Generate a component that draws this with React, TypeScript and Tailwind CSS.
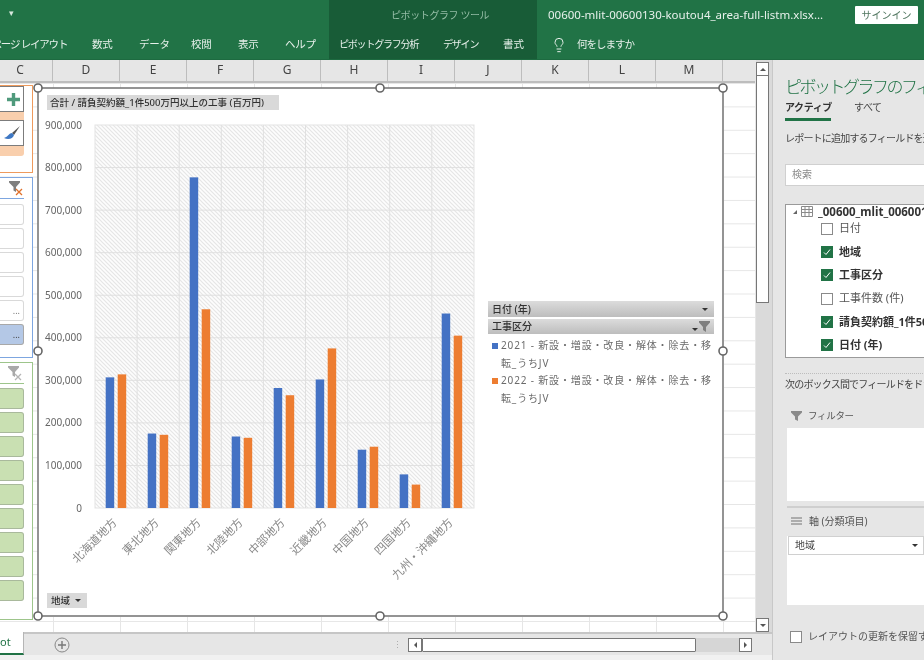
import { Lightbulb } from "lucide-react";

const tabs = [
  { label: "数式", cls: "w-[47px]" },
  { label: "データ", cls: "w-[52px]" },
  { label: "校閲", cls: "w-[47px]" },
  { label: "表示", cls: "w-[47px]" },
  { label: "ヘルプ", cls: "w-[44px]" },
];
const columns = [
  { label: "C", cls: "w-[53px] pr-[12px]" },
  { label: "D", cls: "w-[67px]" },
  { label: "E", cls: "w-[67px]" },
  { label: "F", cls: "w-[67px]" },
  { label: "G", cls: "w-[67px]" },
  { label: "H", cls: "w-[67px]" },
  { label: "I", cls: "w-[67px]" },
  { label: "J", cls: "w-[67px]" },
  { label: "K", cls: "w-[67px]" },
  { label: "L", cls: "w-[67px]" },
  { label: "M", cls: "w-[67px]" },
];
const regions = [
  { name: "北海道地方", a: 307000, b: 314000 },
  { name: "東北地方", a: 175000, b: 172000 },
  { name: "関東地方", a: 777000, b: 467000 },
  { name: "北陸地方", a: 168000, b: 165000 },
  { name: "中部地方", a: 282000, b: 265000 },
  { name: "近畿地方", a: 302000, b: 375000 },
  { name: "中国地方", a: 137000, b: 144000 },
  { name: "四国地方", a: 79000, b: 55000 },
  { name: "九州・沖縄地方", a: 457000, b: 405000 },
];
const fields = [
  { label: "日付", on: false },
  { label: "地域", on: true },
  { label: "工事区分", on: true },
  { label: "工事件数 (件)", on: false },
  { label: "請負契約額_1件500万円以上の工事", on: true },
  { label: "日付 (年)", on: true },
];
const handles = [
  [38, 88],
  [380, 88],
  [723, 88],
  [38, 351],
  [723, 351],
  [38, 616],
  [380, 616],
  [723, 616],
];
const yOf = (v: number) => 508 - (v / 900000) * 383;

function FilterClear({ muted }: { muted?: boolean }) {
  return (
    <svg width="16" height="15" viewBox="0 0 16 15">
      <path d="M0 0h11v1.500L7 6v5L4.500 9.500V6L0 1.500z" fill={muted ? "#a9a9a9" : "#7f7f7f"} />
      <path d="M7 8l6 6M13 8l-6 6" stroke={muted ? "#b5b5b5" : "#e0702a"} strokeWidth="1.300" fill="none" />
    </svg>
  );
}

function Slot({ cls, children }: { cls: string; children?: React.ReactNode }) {
  return (
    <div className={`h-[21px] w-[24px] rounded-r-[3px] border border-l-0 flex items-center justify-end pr-[3px] text-[9px] ${cls}`}>
      {children}
    </div>
  );
}

function Slicers() {
  return (
    <div className="w-[33px] shrink-0 flex flex-col pt-[2px] gap-[4px]">
      <div className="h-[88px] w-[33px] border-[1.5px] border-l-0 border-[#ee9a5c] flex flex-col bg-white">
        <div className="h-[26px] w-[24px] bg-white border border-l-0 border-[#7c7c7c] flex items-center justify-center">
          <svg width="15" height="15" viewBox="0 0 15 15" className="ml-[3px]">
            <path d="M7.500 1v13M1 7.500h13" stroke="#4f9a7c" strokeWidth="3.400" />
          </svg>
        </div>
        <div className="h-[8px] w-[24px] bg-[#f9cfad]" />
        <div className="h-[26px] w-[24px] bg-white border border-l-0 border-[#7c7c7c] flex items-center justify-center">
          <svg width="18" height="16" viewBox="0 0 18 16" className="ml-[1px]">
            <path d="M17 1 9 8l2 2z" fill="#555" />
            <path d="M9 8c-3 0-3 3-8 5 4 2 9 1 10-3z" fill="#3f78c4" />
          </svg>
        </div>
        <div className="h-[10px] w-[24px] bg-[#f9cfad] rounded-br-[3px]" />
      </div>
      <div className="h-[181px] w-[33px] border-[1.5px] border-l-0 border-[#7da6e0] bg-white pt-[3px]">
        <div className="h-[18px] w-[24px] border-b border-[#7da6e0] flex justify-end -mr-px">
          <div className="-mr-[1px]">
            <FilterClear />
          </div>
        </div>
        <div className="flex flex-col gap-[3px] pt-[5px]">
          <Slot cls="bg-white border-[#d9d9d9]" />
          <Slot cls="bg-white border-[#d9d9d9]" />
          <Slot cls="bg-white border-[#d9d9d9]" />
          <Slot cls="bg-white border-[#d9d9d9]" />
          <Slot cls="bg-white border-[#d9d9d9] text-[#777]">...</Slot>
          <Slot cls="bg-[#b4c8e6] border-[#a8a8a8] text-[#444]">...</Slot>
        </div>
      </div>
      <div className="h-[258px] w-[33px] border-[1.5px] border-l-0 border-[#9dc58b] bg-white pt-[3px]">
        <div className="h-[18px] w-[24px] border-b border-[#9dc58b] flex justify-end">
          <FilterClear muted />
        </div>
        <div className="flex flex-col gap-[3px] pt-[4px]">
          {Array.from({ length: 9 }).map((_, i) => (
            <Slot key={i} cls="bg-[#c9e0b2] border-[#a9b99c]" />
          ))}
        </div>
      </div>
    </div>
  );
}

function Chart() {
  return (
    <div className="relative ml-[5px] mt-[5px] w-[686px] h-[529px] bg-white">
      <svg className="absolute inset-0 overflow-visible" width="686" height="529" viewBox="38 88 686 529">
        <defs>
          <pattern id="hatch" width="4" height="4" patternUnits="userSpaceOnUse">
            <rect width="4" height="4" fill="#fdfdfd" />
            <path d="M-1 3 1 5M0 0 4 4M3 -1 5 1" stroke="#e6e6e6" strokeWidth="1.200" />
          </pattern>
        </defs>
        <rect x="95" y="125" width="379" height="383" fill="url(#hatch)" stroke="#e4e4e4" />
        {[1, 2, 3, 4, 5, 6, 7, 8].map((i) => (
          <line key={i} x1={95 + i * 42.1} x2={95 + i * 42.1} y1="125" y2="508" stroke="#e0e0e0" />
        ))}
        {[1, 2, 3, 4, 5, 6, 7, 8].map((i) => (
          <line key={i} x1="95" x2="474" y1={yOf(i * 100000)} y2={yOf(i * 100000)} stroke="#e0e0e0" />
        ))}
        {[0, 1, 2, 3, 4, 5, 6, 7, 8, 9].map((i) => (
          <text key={i} x="82" y={yOf(i * 100000) + 3.500} textAnchor="end" fontSize="10" fill="#666">
            {i === 0 ? "0" : `${i}00,000`}
          </text>
        ))}
        {regions.map((r, i) => {
          const bx = 105.700 + i * 42;
          return (
            <g key={r.name}>
              <rect x={bx} y={yOf(r.a)} width="8.500" height={508 - yOf(r.a)} fill="#4472c4" />
              <rect x={bx + 12} y={yOf(r.b)} width="8.500" height={508 - yOf(r.b)} fill="#ed7d31" />
              <text
                x={bx + 12}
                y={523}
                textAnchor="end"
                fontSize="11.500"
                fill="#8a8a8a"
                transform={`rotate(-45 ${bx + 12} 523)`}
              >
                {r.name}
              </text>
            </g>
          );
        })}
        <rect x="38" y="88" width="685" height="528" fill="none" stroke="#7a7a7a" strokeWidth="1.600" />
        {handles.map(([x, y]) => (
          <circle key={`${x}-${y}`} cx={x} cy={y} r="4" fill="#fff" stroke="#666" strokeWidth="1.600" />
        ))}
      </svg>

      <div className="absolute left-[9px] top-[7px] h-[15px] w-[232px] bg-[#d9d9d9] text-[9.500px] font-medium leading-[15px] text-[#333] pl-[3px] whitespace-nowrap">
        合計 / 請負契約額_1件500万円以上の工事 (百万円)
      </div>
      <div className="absolute left-[9px] top-[505px] h-[15px] w-[40px] bg-[#d9d9d9] text-[9.500px] font-medium leading-[15px] text-[#333] pl-[4px] flex items-center gap-[5px]">
        地域
        <span className="w-0 h-0 border-x-[3px] border-x-transparent border-t-[3px] border-t-[#333]" />
      </div>

      <div className="absolute left-[450px] top-[213px] w-[226px] text-[10px]">
        <div className="h-[16px] bg-gradient-to-b from-[#dcdcdc] to-[#bdbdbd] flex items-center justify-between px-[4px] text-[#333] font-medium">
          日付 (年)
          <span className="w-0 h-0 mr-[2px] border-x-[3px] border-x-transparent border-t-[3px] border-t-[#333]" />
        </div>
        <div className="mt-[2px] h-[15px] bg-gradient-to-b from-[#dcdcdc] to-[#bdbdbd] flex items-center justify-between px-[4px] text-[#333] font-medium">
          工事区分
          <span className="flex items-center gap-[1px]">
            <span className="w-0 h-0 mt-[5px] border-x-[3px] border-x-transparent border-t-[3px] border-t-[#333]" />
            <svg width="11" height="11" viewBox="0 0 11 11">
              <path d="M0 0h11v1.500L7 6v5L4 9V6L0 1.500z" fill="#7f7f7f" />
            </svg>
          </span>
        </div>
        <div className="pl-[4px] text-[#6b6b6b] leading-[17.500px] pt-[3px] tracking-[0.85px]">
          <div className="flex items-start">
            <span className="w-[6px] h-[6px] mt-[6px] mr-[3px] bg-[#4472c4] shrink-0" />
            <span>2021 - 新設・増設・改良・解体・除去・移転_うちJV</span>
          </div>
          <div className="flex items-start">
            <span className="w-[6px] h-[6px] mt-[6px] mr-[3px] bg-[#ed7d31] shrink-0" />
            <span>2022 - 新設・増設・改良・解体・除去・移転_うちJV</span>
          </div>
        </div>
      </div>
    </div>
  );
}

function Check({ on }: { on: boolean }) {
  return on ? (
    <span className="w-[12px] h-[12px] bg-[#217346] shrink-0 flex items-center justify-center">
      <svg width="8" height="8" viewBox="0 0 8 8">
        <path d="M1 4.500 3 6.500 7 1.500" stroke="#fff" strokeWidth="1" fill="none" />
      </svg>
    </span>
  ) : (
    <span className="w-[12px] h-[12px] bg-white border border-[#8a8a8a] shrink-0" />
  );
}

function Pane() {
  return (
    <div className="w-[152px] shrink-0 border-l border-[#c8c8c8] bg-[#e6e6e6] overflow-hidden pl-[12px]">
      <div className="w-[300px] pt-[15px] h-[39px] text-[17px] leading-[24px] tracking-[-2.500px] text-[#217346] whitespace-nowrap font-light">
        ピボットグラフのフィールド
      </div>
      <div className="flex gap-[23px] h-[17px] text-[10px] leading-[17px] whitespace-nowrap text-[#444] tracking-[-0.4px]">
        <span className="font-bold w-[46px] text-[#333]">アクティブ</span>
        <span>すべて</span>
      </div>
      <div className="w-[46px] h-[3px] mt-[2px] bg-[#217346]" />
      <div className="w-[300px] mt-[10px] text-[10px] leading-[14px] text-[#444] tracking-[-0.8px] whitespace-nowrap">
        レポートに追加するフィールドを選択してください:
      </div>
      <div className="w-[200px] h-[22px] mt-[19px] bg-white border border-[#d0d0d0] pl-[6px] text-[10px] leading-[19px] text-[#8a8a8a]">
        検索
      </div>
      <div className="w-[200px] h-[154px] mt-[18px] bg-white border border-[#9a9a9a] text-[11px] text-[#444] overflow-hidden">
        <div className="flex items-center h-[13px] pl-[7px] font-bold text-[11.500px] text-[#333] whitespace-nowrap">
          <span className="w-0 h-0 shrink-0 mr-[4px] border-l-[4px] border-l-transparent border-b-[4px] border-b-[#666]" />
          <svg width="12" height="11" viewBox="0 0 12 11" className="mr-[5px] shrink-0">
            <path d="M.5.5h11v10H.5zM.5 3.500h11M.5 6.500h11M4 .5v10M8 .5v10" stroke="#8a8a8a" fill="#fff" />
          </svg>
          <span className="shrink-0">_00600_mlit_00600130_koutou4</span>
        </div>
        <div className="flex flex-col pl-[35px] gap-[6px] pt-[2px]">
          {fields.map((f) => (
            <div key={f.label} className={`flex items-center h-[17.300px] whitespace-nowrap ${f.on ? "font-bold text-[#333]" : "text-[#555]"}`}>
              <Check on={f.on} />
              <span className="ml-[6px]">{f.label}</span>
            </div>
          ))}
        </div>
      </div>
      <div className="w-[200px] mt-[15px] border-t border-dotted border-[#bdbdbd]" />
      <div className="w-[300px] mt-[3px] text-[10px] leading-[14px] text-[#444] tracking-[-0.8px] whitespace-nowrap">
        次のボックス間でフィールドをドラッグしてください:
      </div>
      <div className="flex items-center h-[14px] mt-[18px] pl-[6px] text-[9.500px] text-[#555] tracking-[-0.3px]">
        <svg width="11" height="10" viewBox="0 0 11 10" className="mr-[6px]">
          <path d="M0 0h11v1.500L7 5.500V10L4 8.500v-3L0 1.500z" fill="#8a8a8a" />
        </svg>
        フィルター
      </div>
      <div className="w-[200px] h-[73px] mt-[5px] ml-[2px] bg-white" />
      <div className="w-[200px] mt-[5px] ml-[2px] border-t-2 border-[#cfcfcf]" />
      <div className="flex items-center h-[14px] mt-[6px] pl-[6px] text-[10px] text-[#555]">
        <svg width="11" height="8" viewBox="0 0 11 8" className="mr-[7px]">
          <path d="M0 1h11M0 4h11M0 7h11" stroke="#999" strokeWidth="1.300" />
        </svg>
        軸 (分類項目)
      </div>
      <div className="w-[200px] h-[69px] mt-[8px] ml-[2px] bg-white">
        <div className="w-[136px] h-[19px] ml-[1px] border border-[#d0d0d0] flex items-center justify-between pl-[6px] pr-[5px] text-[10px] text-[#444]">
          地域
          <span className="w-0 h-0 border-x-[3px] border-x-transparent border-t-[3px] border-t-[#333]" />
        </div>
      </div>
      <div className="flex items-center mt-[24px] pl-[5px] w-[300px] text-[10px] text-[#555] whitespace-nowrap">
        <span className="w-[12px] h-[12px] border border-[#8a8a8a] bg-white shrink-0 mr-[6px]" />
        レイアウトの更新を保留する
      </div>
    </div>
  );
}

function VScroll() {
  return (
    <div className="w-[17px] shrink-0 bg-[#dadada] flex flex-col pt-[2px] border-l border-[#e6e6e6]">
      <div className="w-[13px] h-[14px] bg-white border border-[#777] flex items-center justify-center">
        <span className="w-0 h-0 border-x-[3px] border-x-transparent border-b-[3px] border-b-[#555]" />
      </div>
      <div className="w-[13px] h-[227px] bg-white border border-[#777] border-t-0" />
      <div className="flex-1" />
      <div className="w-[13px] h-[14px] bg-white border border-[#777] flex items-center justify-center">
        <span className="w-0 h-0 border-x-[3px] border-x-transparent border-t-[3px] border-t-[#555]" />
      </div>
    </div>
  );
}

export default function App() {
  return (
    <div className="w-[924px] h-[660px] overflow-hidden flex flex-col bg-[#f1f1f1] font-['Noto_Sans','Noto_Sans_CJK_JP',sans-serif] blur-[0.4px]">
      {/* Ribbon */}
      <div className="h-[60px] shrink-0 bg-[#217346] flex text-white border-b border-[#1d6a40]">
        <div className="w-[329px] shrink-0 flex flex-col">
          <div className="h-[30px] pl-[9px] pt-[6px] text-[9px] text-[#d8e8de]">▾</div>
          <div className="h-[29px] flex items-center text-[10.500px] text-[#e6f0ea] whitespace-nowrap tracking-[-0.3px]">
            <div className="w-[92px] overflow-hidden shrink-0 flex">
              <span className="-ml-[8.500px] tracking-[-1.200px]">ページ レイアウト</span>
            </div>
            {tabs.map((t) => (
              <span key={t.label} className={`${t.cls} shrink-0`}>
                {t.label}
              </span>
            ))}
          </div>
        </div>
        <div className="w-[208px] shrink-0 bg-[#185c37] flex flex-col">
          <div className="h-[30px] pl-[62px] flex items-center text-[10px] text-[#95bda6] tracking-[-0.4px] whitespace-nowrap">
            ピボットグラフ ツール
          </div>
          <div className="h-[29px] pl-[10px] flex items-center text-[10px] text-[#e6f0ea] whitespace-nowrap">
            <span className="w-[104px] shrink-0 tracking-[-1.200px]">ピボットグラフ分析</span>
            <span className="w-[60px] shrink-0 tracking-[-1.200px]">デザイン</span>
            <span className="text-[10.500px]">書式</span>
          </div>
        </div>
        <div className="flex-1 flex flex-col min-w-0">
          <div className="h-[30px] flex items-center pl-[11px] pr-[6px] justify-between">
            <span className="text-[11.500px] text-[#e8f1ec] whitespace-nowrap">00600-mlit-00600130-koutou4_area-full-listm.xlsx…</span>
            <span className="w-[63px] h-[18px] shrink-0 bg-white text-[#50765f] text-[10px] leading-[18px] text-center rounded-[1px]">
              サインイン
            </span>
          </div>
          <div className="h-[29px] flex items-center pl-[14px] text-[10.500px] text-[#e6f0ea] tracking-[-1px]">
            <Lightbulb size={16} strokeWidth={1.500} className="mr-[10px]" />
            何をしますか
          </div>
        </div>
      </div>

      {/* Body */}
      <div className="flex-1 min-h-0 flex">
        <div className="w-[772px] shrink-0 flex flex-col">
          <div className="flex-1 min-h-0 flex">
            <div className="w-[755px] shrink-0 flex flex-col">
              <div className="h-[23px] shrink-0 bg-[#e6e6e6] flex border-b-2 border-[#bdbdbd]">
                {columns.map((c) => (
                  <div key={c.label} className={`${c.cls} shrink-0 border-r border-[#bdbdbd] text-center text-[12px] leading-[20px] text-[#444]`}>
                    {c.label}
                  </div>
                ))}
              </div>
              <div className="flex-1 min-h-0 flex bg-white overflow-hidden bg-[linear-gradient(#e6e6e6_1px,transparent_1px),linear-gradient(90deg,#e6e6e6_1px,transparent_1px)] bg-size-[67px_23.400px] bg-position-[53px_0]">
                <Slicers />
                <Chart />
              </div>
            </div>
            <VScroll />
          </div>
          <div className="h-[23px] shrink-0 bg-[#e6e6e6] border-t-2 border-[#c6c6c6] flex items-center">
            <div className="w-[24px] h-[23px] -mt-[2px] bg-white border-r border-[#b5b5b5] border-b-2 border-b-[#217346] text-[11px] leading-[20px] text-[#217346] text-right pr-[13px]">
              ot
            </div>
            <svg width="16" height="16" viewBox="0 0 16 16" className="ml-[30px]">
              <circle cx="8" cy="8" r="7" fill="none" stroke="#888" />
              <path d="M8 4v8M4 8h8" stroke="#777" strokeWidth="1.400" />
            </svg>
            <span className="ml-[323px] text-[9px] leading-[3px] text-[#aaa] w-[2px]">⋮</span>
            <div className="ml-[13px] flex h-[14px] w-[344px]">
              <div className="w-[14px] h-[14px] bg-white border border-[#777] flex items-center justify-center">
                <span className="w-0 h-0 border-y-[3px] border-y-transparent border-r-[3px] border-r-[#555]" />
              </div>
              <div className="w-[274px] h-[14px] bg-white border border-[#777] rounded-[1px]" />
              <div className="w-[43px] h-[14px] bg-[#d6d6d6]" />
              <div className="w-[13px] h-[14px] bg-white border border-[#777] flex items-center justify-center">
                <span className="w-0 h-0 border-y-[3px] border-y-transparent border-l-[3px] border-l-[#555]" />
              </div>
            </div>
          </div>
          <div className="h-[5px] shrink-0 bg-[#f1f1f1]" />
        </div>
        <Pane />
      </div>
    </div>
  );
}
